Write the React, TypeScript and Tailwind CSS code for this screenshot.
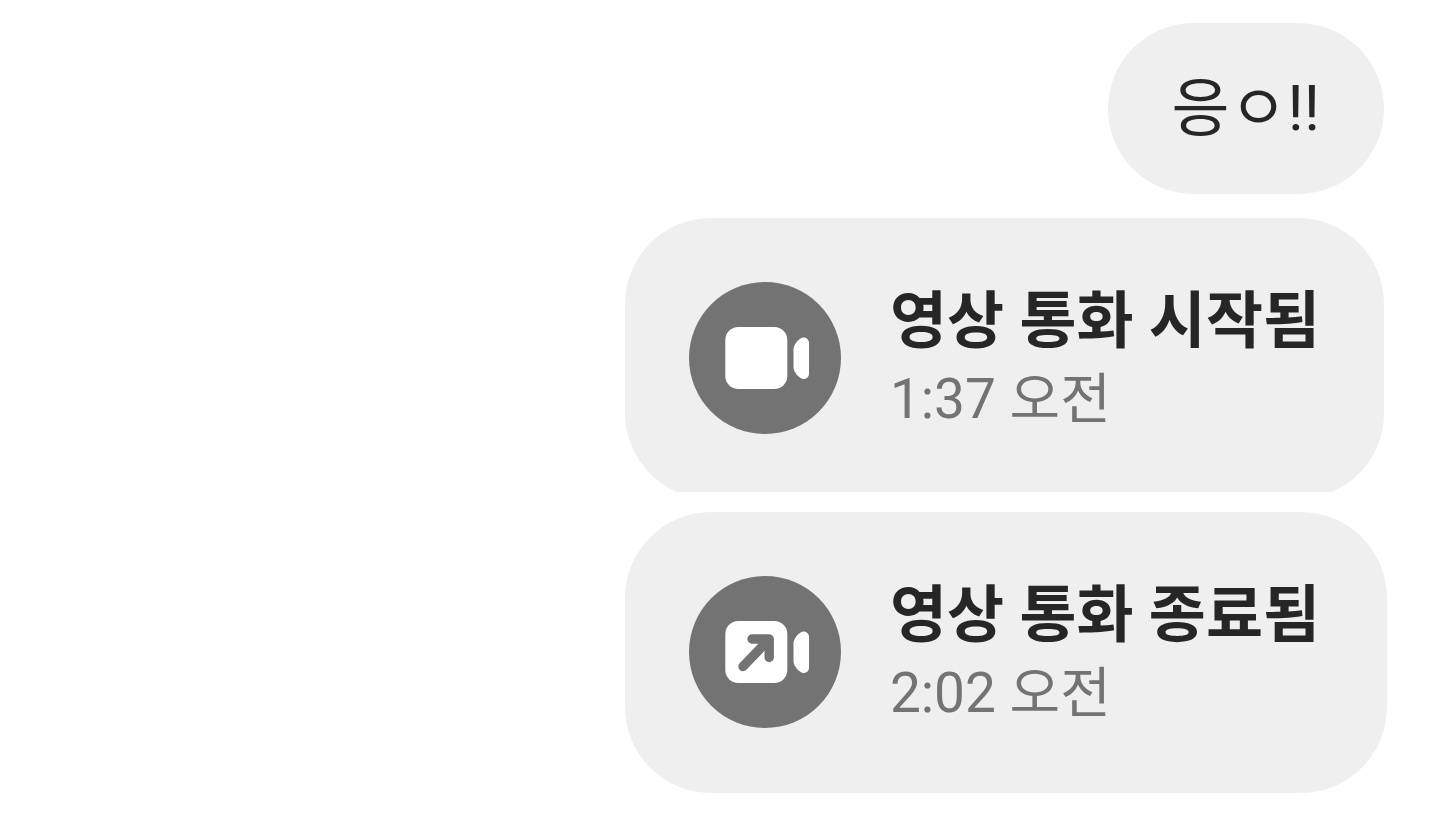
const circle = 'flex size-[152px] shrink-0 items-center justify-center rounded-full bg-[#737373]';

function VideoIcon({ ended }: { ended?: boolean }) {
  return (
    <div className={circle}>
      <svg width="152" height="152" viewBox="0 0 152 152" fill="none" aria-hidden="true">
        <rect x="36.3" y="45" width="62" height="62" rx="13" fill="#fff" />
        <path
          d="M104.5 67C104.5 62.5 110.5 55.5 114.5 55.5C118 55.5 120 58 120 61V91.5C120 94.5 118 97 114.5 97C110.5 97 104.5 90 104.5 85.500Z"
          fill="#fff"
        />
        {ended && (
          <path
            d="M54 90.5L78 65.5M63 63H80.2V81.500"
            stroke="#737373"
            strokeWidth="9.4"
            strokeLinecap="round"
            strokeLinejoin="round"
          />
        )}
      </svg>
    </div>
  );
}

export default function App() {
  return (
    <main className="flex min-h-screen flex-col items-end bg-white pt-[23px] pr-[53px] font-[Roboto,'Noto_Sans_CJK_KR',sans-serif] text-[#262626]">
      <p className="mr-[3px] mb-6 rounded-[86px] bg-[#efefef] px-16 py-[42px] text-[63px] leading-[87px]">
        응ㅇ!!
      </p>

      {/* the first bubble is cut off flat along its bottom edge */}
      <div className="mr-[3px] mb-5 overflow-hidden">
        <article className="-mb-[7px] flex items-start gap-[49px] rounded-[86px] bg-[#efefef] px-16 pt-16 pb-[63px]">
          <VideoIcon />
          <div>
            <h2 className="text-[62px] leading-[80px] font-bold">영상 통화 시작됨</h2>
            <p className="text-[55px] leading-[74px] text-[#737373]">1:37 오전</p>
          </div>
        </article>
      </div>

      <article className="flex items-start gap-[49px] rounded-[86px] bg-[#efefef] pt-16 pr-[67px] pb-[63px] pl-16">
        <VideoIcon ended />
        <div>
          <h2 className="text-[62px] leading-[80px] font-bold">영상 통화 종료됨</h2>
          <p className="text-[55px] leading-[74px] text-[#737373]">2:02 오전</p>
        </div>
      </article>
    </main>
  );
}
